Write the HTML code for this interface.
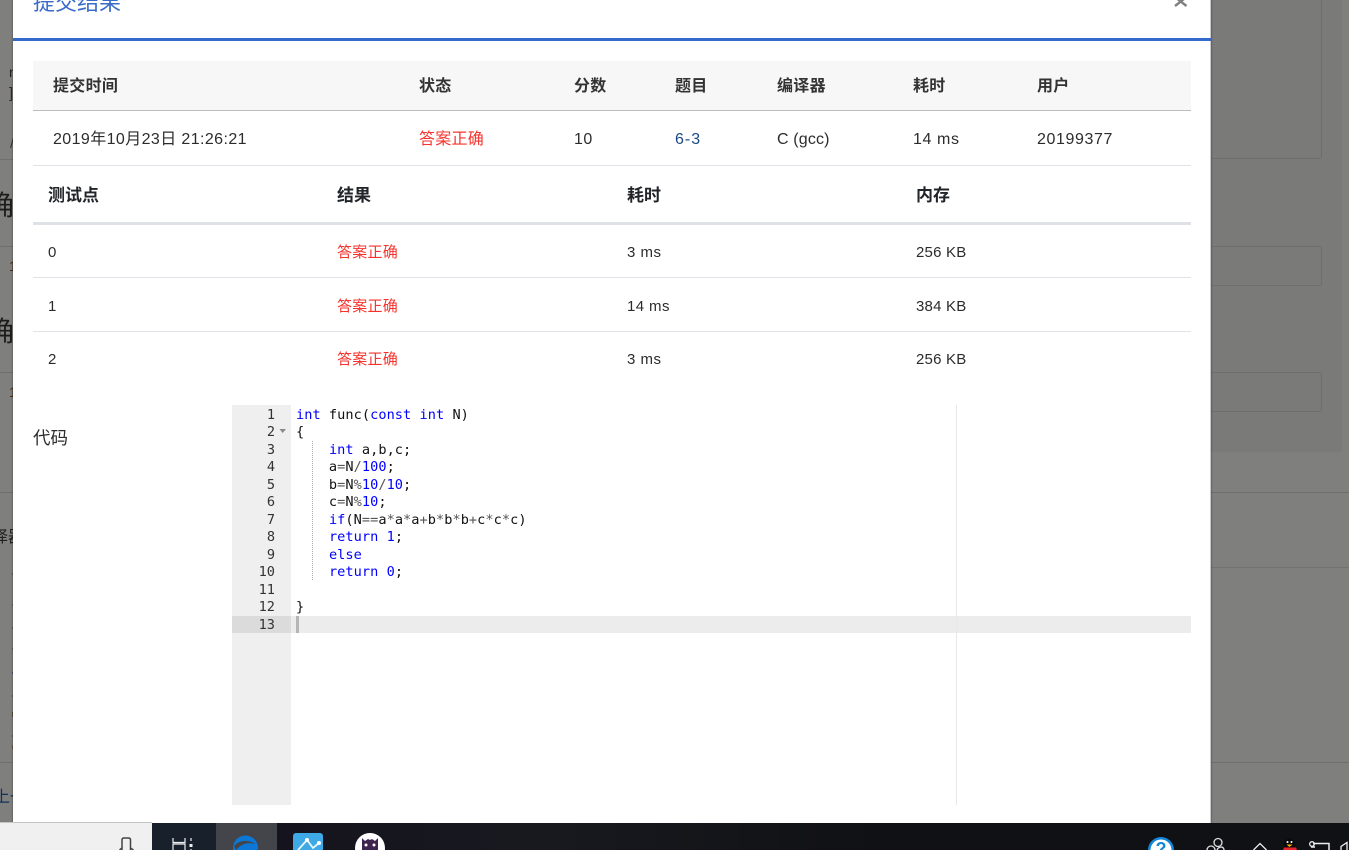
<!DOCTYPE html>
<html><head><meta charset="utf-8"><style>
html,body{margin:0;padding:0;width:1349px;height:850px;overflow:hidden;background:#7f7f7e}
*{box-sizing:border-box}
body{position:relative;font-family:"Liberation Sans","Noto Sans CJK SC",sans-serif;color:#333}
.a{position:absolute;white-space:nowrap}
.l{position:absolute}
.t{font-size:16px;line-height:22px;color:#2c2c2c}
.b{font-weight:700;color:#333;letter-spacing:.3px}
.h{font-weight:700;color:#212529;font-size:17px}
.r{color:#f5332d;letter-spacing:.25px}
.s{font-size:15px}
.code{position:absolute;font-family:"DejaVu Sans Mono","Liberation Mono",monospace;font-size:13.6px;line-height:17.5px;white-space:pre;left:296px;top:406.5px;color:#111;letter-spacing:.05px}
.code i{font-style:normal;color:#00f}
.code u{text-decoration:none;color:#555}
.num{position:absolute;left:232px;width:43px;text-align:right;top:406.5px;font-family:"DejaVu Sans Mono","Liberation Mono",monospace;font-size:13.6px;line-height:17.5px;color:#333;white-space:pre}
</style></head><body>
<!-- backdrop -->
<div class="l" style="left:1210px;top:0;width:132px;height:452px;background:#7a7a79"></div>
<div class="l" style="left:1210px;top:-5px;width:112px;height:164px;border:1px solid #6e6e6d;border-top:0;border-radius:3px"></div>
<div class="l" style="left:1210px;top:246px;width:112px;height:40px;border:1px solid #6e6e6d;border-radius:3px"></div>
<div class="l" style="left:1210px;top:372px;width:112px;height:40px;border:1px solid #6e6e6d;border-radius:3px"></div>
<div class="l" style="left:1210px;top:492px;width:139px;height:1px;background:#6f6f6e"></div>
<div class="l" style="left:1210px;top:567px;width:139px;height:1px;background:#727271"></div>
<div class="l" style="left:1210px;top:762px;width:139px;height:1px;background:#6f6f6e"></div>
<div class="l" style="left:0;top:159px;width:13px;height:1px;background:#6f6f6e"></div>
<div class="l" style="left:0;top:246px;width:13px;height:1px;background:#6f6f6e"></div>
<div class="l" style="left:0;top:372px;width:13px;height:1px;background:#6f6f6e"></div>
<div class="l" style="left:0;top:492px;width:13px;height:1px;background:#6f6f6e"></div>
<div class="l" style="left:0;top:762px;width:13px;height:1px;background:#6f6f6e"></div>
<div style="position:absolute;left:0;top:0;width:13px;height:823px;overflow:hidden">
<div class="a" style="left:9px;top:64px;font-size:14px;color:#222">r</div>
<div class="a" style="left:9px;top:85px;font-size:15px;color:#3a2a10">]</div>
<div class="a" style="left:10px;top:135px;font-size:14px;color:#333">/</div>
<div class="a" style="left:-14px;top:188px;font-size:28px;line-height:36px;color:#1c1c1c">确</div>
<div class="a" style="left:9px;top:258px;font-size:14px;color:#4a2a10">1</div>
<div class="a" style="left:-14px;top:314px;font-size:28px;line-height:36px;color:#1c1c1c">确</div>
<div class="a" style="left:9px;top:384px;font-size:14px;color:#4a2a10">1</div>
<div class="a" style="left:-8px;top:523px;font-size:16px;color:#222">译器</div>
<div class="a" style="left:-6px;top:783px;font-size:16px;color:#12305a">上一</div>
<div class="l" style="left:12px;top:573px;width:1px;height:2px;background:#6b5a48"></div>
<div class="l" style="left:12px;top:604px;width:1px;height:2px;background:#5f5f5f"></div>
<div class="l" style="left:12px;top:627px;width:1px;height:2px;background:#5f5f5f"></div>
<div class="l" style="left:12px;top:648px;width:1px;height:2px;background:#5f5f5f"></div>
<div class="l" style="left:12px;top:672px;width:1px;height:2px;background:#46586e"></div>
<div class="l" style="left:12px;top:695px;width:1px;height:2px;background:#6b5a48"></div>
<div class="l" style="left:12px;top:712px;width:1px;height:5px;background:#5a4c3c"></div>
<div class="l" style="left:12px;top:735px;width:1px;height:2px;background:#5f5f5f"></div>
<div class="l" style="left:12px;top:745px;width:1px;height:4px;background:#6b5a48"></div>
</div>
<!-- modal -->
<div class="l" style="left:13px;top:0;width:1198px;height:823px;background:#fff;border-right:1px solid #c9c9c9;box-shadow:0 0 2px rgba(0,0,0,.5)"></div>
<div class="a" style="left:33px;top:-9px;font-size:22px;line-height:24px;color:#3a6bc9">提交结果</div>
<svg class="l" style="left:1173px;top:-4px" width="16" height="14"><path d="M2 2L13.500 11M13.500 2L2 11" stroke="#808080" stroke-width="2.400" fill="none" transform="translate(0,-1)"/></svg>
<div class="l" style="left:13px;top:38px;width:1198px;height:3px;background:#3669cc"></div>
<!-- top table -->
<div class="l" style="left:33px;top:61px;width:1158px;height:50px;background:#f7f7f7;border-bottom:1px solid #bdbdbd"></div>
<div class="a t b" style="left:53px;top:76px">提交时间</div>
<div class="a t b" style="left:419px;top:76px">状态</div>
<div class="a t b" style="left:574px;top:76px">分数</div>
<div class="a t b" style="left:675px;top:76px">题目</div>
<div class="a t b" style="left:777px;top:76px">编译器</div>
<div class="a t b" style="left:913px;top:76px">耗时</div>
<div class="a t b" style="left:1037px;top:76px">用户</div>
<div class="a t" style="left:53px;top:129px;letter-spacing:.4px">2019年10月23日 21:26:21</div>
<div class="a t r" style="left:419px;top:129px">答案正确</div>
<div class="a t" style="left:574px;top:129px;letter-spacing:.5px">10</div>
<div class="a t" style="left:675px;top:129px;color:#1b4a85;letter-spacing:1px">6-3</div>
<div class="a t" style="left:777px;top:129px;letter-spacing:.15px">C (gcc)</div>
<div class="a t" style="left:913px;top:129px;letter-spacing:.6px">14 ms</div>
<div class="a t" style="left:1037px;top:129px;letter-spacing:.6px">20199377</div>
<div class="l" style="left:33px;top:165px;width:1158px;height:1px;background:#e0e3e8"></div>
<!-- second table -->
<div class="a t h" style="left:48px;top:185px">测试点</div>
<div class="a t h" style="left:337px;top:185px">结果</div>
<div class="a t h" style="left:627px;top:185px">耗时</div>
<div class="a t h" style="left:916px;top:185px">内存</div>
<div class="l" style="left:33px;top:222px;width:1158px;height:3px;background:#dee2e6"></div>
<div class="a t s" style="left:48px;top:242px">0</div><div class="a t s r" style="left:337px;top:242px">答案正确</div><div class="a t s" style="left:627px;top:242px;letter-spacing:.5px">3 ms</div><div class="a t s" style="left:916px;top:242px;letter-spacing:.2px">256 KB</div>
<div class="l" style="left:33px;top:277px;width:1158px;height:1px;background:#e0e3e8"></div>
<div class="a t s" style="left:48px;top:296px">1</div><div class="a t s r" style="left:337px;top:296px">答案正确</div><div class="a t s" style="left:627px;top:296px;letter-spacing:.4px">14 ms</div><div class="a t s" style="left:916px;top:296px;letter-spacing:.2px">384 KB</div>
<div class="l" style="left:33px;top:331px;width:1158px;height:1px;background:#e0e3e8"></div>
<div class="a t s" style="left:48px;top:349px">2</div><div class="a t s r" style="left:337px;top:349px">答案正确</div><div class="a t s" style="left:627px;top:349px;letter-spacing:.5px">3 ms</div><div class="a t s" style="left:916px;top:349px;letter-spacing:.2px">256 KB</div>
<div class="a t" style="left:33px;top:427px;font-size:17.500px">代码</div>
<!-- editor -->
<div class="l" style="left:232px;top:405px;width:59px;height:400px;background:#efefef"></div>
<div class="l" style="left:232px;top:616px;width:59px;height:17px;background:#dbdbdb"></div>
<div class="l" style="left:291px;top:616px;width:900px;height:17px;background:#ececec"></div>
<div class="l" style="left:956px;top:405px;width:1px;height:400px;background:#e8e8e8"></div>
<div class="l" style="left:296px;top:616px;width:3px;height:17px;background:#b5b5b5"></div>
<div class="l" style="left:312px;top:441px;width:0;height:139px;border-left:1px dotted #aaa"></div>
<svg class="l" style="left:279px;top:428px" width="8" height="6"><path d="M0.500 1H7L3.700 5Z" fill="#888"/></svg>
<div class="num">1
2
3
4
5
6
7
8
9
10
11
12
13</div>
<div class="code"><i>int</i> func(<i>const</i> <i>int</i> N)
{
    <i>int</i> a,b,c;
    a<u>=</u>N<u>/</u><i>100</i>;
    b<u>=</u>N<u>%</u><i>10</i><u>/</u><i>10</i>;
    c<u>=</u>N<u>%</u><i>10</i>;
    <i>if</i>(N<u>==</u>a<u>*</u>a<u>*</u>a<u>+</u>b<u>*</u>b<u>*</u>b<u>+</u>c<u>*</u>c<u>*</u>c)
    <i>return</i> <i>1</i>;
    <i>else</i>
    <i>return</i> <i>0</i>;

}</div>
<!-- taskbar -->
<div class="l" style="left:0;top:822px;width:152px;height:1px;background:#c4c4c4"></div>
<div class="l" style="left:0;top:823px;width:1349px;height:27px;background:#101114"></div>
<div class="l" style="left:0;top:823px;width:152px;height:27px;background:#f0f0f0"></div>
<div class="l" style="left:152px;top:823px;width:64px;height:27px;background:#18212b"></div>
<div class="l" style="left:216px;top:823px;width:61px;height:27px;background:#44454a"></div>
<div class="l" style="left:277px;top:823px;width:600px;height:27px;background:linear-gradient(90deg,#15141e,#18191f 45%,#101114)"></div>
<svg class="l" style="left:0;top:823px" width="1349" height="27" fill="none">
<path d="M122 27V17Q122 15 124 15H128.500Q130.500 15 130.500 17V27M119.500 27L122 25M130.500 25L133.500 27" stroke="#444" stroke-width="1.500"/>
<path d="M173 15V19.500H185V15M173 27V21H185V27" stroke="#eee" stroke-width="1.200"/>
<rect x="189.500" y="21" width="3" height="3" fill="#eee"/><path d="M191 15V18M191 26V27" stroke="#eee" stroke-width="1.200"/>
<circle cx="245.500" cy="25" r="12.500" fill="#0b78d8"/>
<path d="M234 23Q240 16 250 18.500Q253 19 255 21Q248 19 243 21.500Q239 23.500 236 27Z" fill="#44454a"/>
<rect x="293" y="10" width="30" height="22" rx="3" fill="#3fa9e6"/>
<path d="M298 27L307 17L313 25L319 20" stroke="#e8f6ff" stroke-width="1.800"/>
<circle cx="307" cy="17" r="2" fill="#fff"/><circle cx="319" cy="20" r="2" fill="#fff"/>
<circle cx="370" cy="25" r="15" fill="#fff"/>
<path d="M362 27V15L365 18L368 16L370 17L372 16L375 18L378 15V27Z" fill="#3d2450"/>
<circle cx="366" cy="22" r="1.500" fill="#fff"/><circle cx="374" cy="22" r="1.500" fill="#fff"/>
<circle cx="1161" cy="27" r="13" fill="#1386d8"/><circle cx="1161" cy="27" r="10.500" fill="#fff"/>
<text x="1161" y="32" text-anchor="middle" font-family="Liberation Sans" font-weight="700" font-size="18" fill="#1386d8">?</text>
<circle cx="1218" cy="19.500" r="4" stroke="#ddd" stroke-width="1.300"/>
<circle cx="1211" cy="27" r="4" stroke="#ddd" stroke-width="1.300"/>
<path d="M1217 27Q1218 24 1222 24Q1224 25 1224 27" stroke="#ddd" stroke-width="1.300"/>
<path d="M1253.500 27L1260 20.500L1266.500 27" stroke="#eee" stroke-width="1.300"/>
<ellipse cx="1289.500" cy="22" rx="5.500" ry="6.500" fill="#0a0a0a"/>
<path d="M1284 24.500H1296L1297 27H1283Z" fill="#e8242a"/><path d="M1286.500 21.500H1292.500L1289.500 24Z" fill="#f4b400"/>
<circle cx="1287.500" cy="19" r="1" fill="#fff"/><circle cx="1291.500" cy="19" r="1" fill="#fff"/>
<path d="M1313 20.500H1329V27M1311 24H1315" stroke="#eee" stroke-width="1.500"/>
<circle cx="1312" cy="21" r="2.300" stroke="#eee" stroke-width="1.300"/>
<path d="M1341 27V23.500L1347 19.500V27" stroke="#eee" stroke-width="1.300"/>
</svg>
</body></html>
